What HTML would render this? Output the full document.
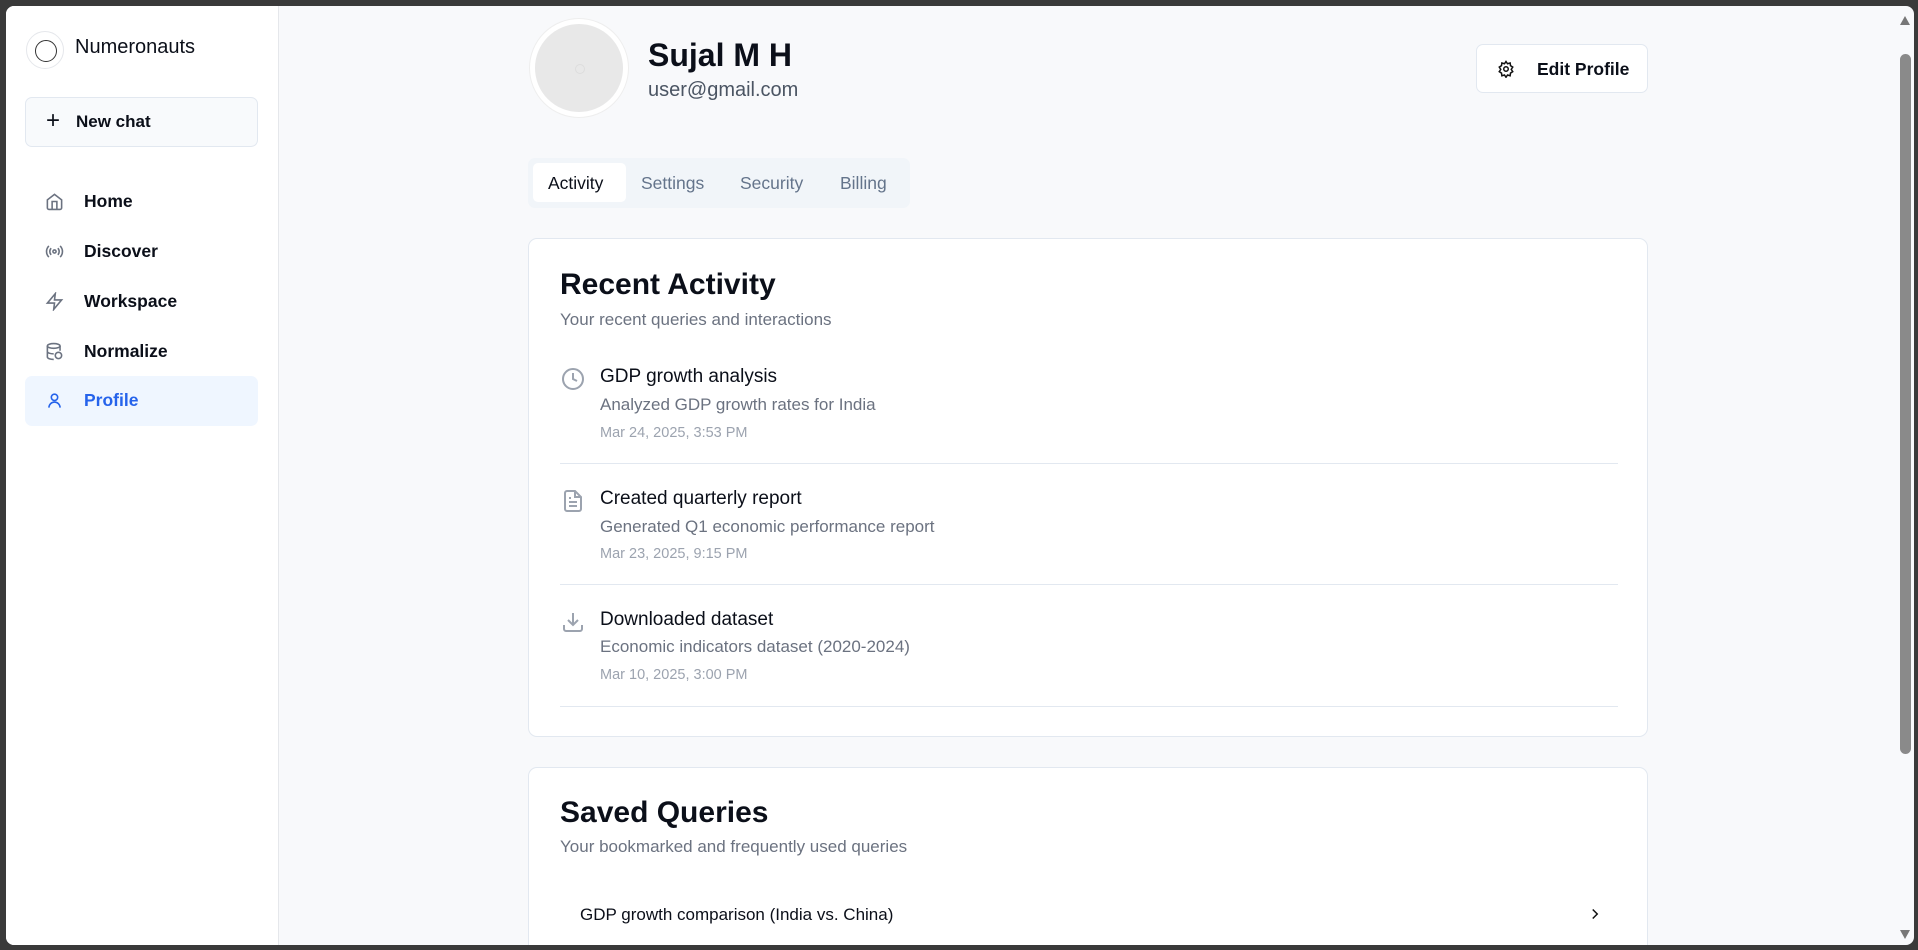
<!DOCTYPE html>
<html><head><meta charset="utf-8"><style>
*{box-sizing:border-box;margin:0;padding:0}
body{width:1918px;height:950px;background:#3a3a3a;font-family:"Liberation Sans",sans-serif;overflow:hidden;position:relative;color:#0b0f19}
.win{position:absolute;left:6px;top:6px;width:1908px;height:939px;background:#f8f9fb;border-radius:8px;overflow:hidden}
.side{position:absolute;left:0;top:0;width:273px;height:100%;background:#fff;border-right:1px solid #e5e7eb}
.a{position:absolute;white-space:nowrap}
.logo{left:20px;top:25px;width:38px;height:38px;border-radius:50%;border:1px solid #e5e7eb}
.logo:after{content:"";position:absolute;left:8px;top:8px;width:20px;height:20px;border-radius:50%;border:1.5px solid #333}
.nc{left:19px;top:91px;width:233px;height:50px;border:1px solid #e2e8f0;border-radius:7px;background:#f8fafc;font-size:17px;font-weight:600;padding:14px 0 0 50px}
.nav{left:19px;width:233px;height:50px;border-radius:7px;font-size:17.5px;font-weight:600;padding:14px 0 0 59px}
.nav svg{position:absolute;left:20px;top:15px}
.main{position:absolute;left:522px;top:0}
.card{position:absolute;background:#fff;border:1px solid #e2e8f0;border-radius:9px;width:1120px}
.t{font-size:19px;font-weight:500}
.d{font-size:17px;color:#6b7280}
.dt{font-size:14.5px;color:#9ca3af}
.hr{position:absolute;left:31px;width:1058px;height:1px;background:#e2e8f0}
.sb{position:absolute;right:3px;top:48px;width:11px;height:700px;background:#8a8a8a;border-radius:6px}
</style></head><body>
<div class="win">
<div class="side">
<div class="a logo"></div>
<div class="a" style="left:69px;top:30px;font-size:20px">Numeronauts</div>
<div class="a nc"><span style="position:absolute;left:20px;top:9px;font-size:24px;font-weight:300">+</span>New chat</div>
<div class="a nav" style="top:171px"><svg width="19" height="19" viewBox="0 0 24 24" fill="none" stroke="#6b7280" stroke-width="2"><path d="M3 10l9-7 9 7v10a2 2 0 0 1-2 2H5a2 2 0 0 1-2-2z"/><path d="M9 22V12h6v10"/></svg>Home</div>
<div class="a nav" style="top:221px"><svg width="19" height="19" viewBox="0 0 24 24" fill="none" stroke="#6b7280" stroke-width="2"><circle cx="12" cy="12" r="2"/><path d="M16.2 7.8a6 6 0 0 1 0 8.4M7.8 16.2a6 6 0 0 1 0-8.4M19.1 4.9a10 10 0 0 1 0 14.2M4.9 19.1a10 10 0 0 1 0-14.2"/></svg>Discover</div>
<div class="a nav" style="top:271px"><svg width="19" height="19" viewBox="0 0 24 24" fill="none" stroke="#6b7280" stroke-width="2"><path d="M13 2L3 14h9l-1 8 10-12h-9z"/></svg>Workspace</div>
<div class="a nav" style="top:321px"><svg width="19" height="19" viewBox="0 0 24 24" fill="none" stroke="#6b7280" stroke-width="2"><ellipse cx="11" cy="5" rx="8" ry="3"/><path d="M3 5v14c0 1.7 3.6 3 8 3M3 12c0 1.7 3.6 3 8 3M19 5v6"/><circle cx="17" cy="17" r="4"/></svg>Normalize</div>
<div class="a nav" style="top:370px;background:#eff6ff;color:#2563eb"><svg width="19" height="19" viewBox="0 0 24 24" fill="none" stroke="#2563eb" stroke-width="2"><circle cx="12" cy="8" r="4"/><path d="M5 21a7 7 0 0 1 14 0"/></svg>Profile</div>
</div>
<div class="main">
<div class="a" style="left:2px;top:13px;width:98px;height:98px;border-radius:50%;background:#e8e8e8;border:5px solid #fff;box-shadow:0 0 0 1px #eee"><div style="position:absolute;left:40px;top:40px;width:10px;height:10px;border-radius:50%;border:1px solid #ddd"></div></div>
<div class="a" style="left:120px;top:31px;font-size:32px;font-weight:600">Sujal M H</div>
<div class="a" style="left:120px;top:73px;font-size:20px;color:#4b5563">user@gmail.com</div>
<div class="a" style="left:948px;top:38px;width:172px;height:49px;background:#fff;border:1px solid #e2e8f0;border-radius:7px;font-size:17.5px;font-weight:600;padding:14px 0 0 60px"><svg style="position:absolute;left:20px;top:15px" width="18" height="18" viewBox="0 0 24 24" fill="none" stroke="#111" stroke-width="2"><circle cx="12" cy="12" r="3"/><path d="M12 2l2 3 3.5-1 .5 3.5 3 2-2 3 2 3-3 2-.5 3.5-3.5-1-2 3-2-3-3.5 1-.5-3.5-3-2 2-3-2-3 3-2 .5-3.5 3.5 1z"/></svg>Edit Profile</div>
<div class="a" style="left:0;top:152px;width:382px;height:50px;background:#f1f5f9;border-radius:7px;font-size:17.5px;color:#64748b">
<div class="a" style="left:5px;top:5px;width:93px;height:39px;background:#fff;border-radius:5px;color:#0b0f19;padding:10px 0 0 15px">Activity</div>
<div class="a" style="left:113px;top:15px">Settings</div>
<div class="a" style="left:212px;top:15px">Security</div>
<div class="a" style="left:312px;top:15px">Billing</div>
</div>
<div class="card" style="left:0;top:232px;height:499px">
<div class="a" style="left:31px;top:29px;font-size:30px;font-weight:600">Recent Activity</div>
<div class="a d" style="left:31px;top:71px">Your recent queries and interactions</div>
<svg class="a" style="left:32px;top:128px" width="24" height="24" viewBox="0 0 24 24" fill="none" stroke="#9ca3af" stroke-width="2"><circle cx="12" cy="12" r="10"/><path d="M12 6v6l4 2"/></svg>
<div class="a t" style="left:71px;top:127px">GDP growth analysis</div>
<div class="a d" style="left:71px;top:156px">Analyzed GDP growth rates for India</div>
<div class="a dt" style="left:71px;top:186px">Mar 24, 2025, 3:53 PM</div>
<div class="hr" style="top:224px"></div>
<svg class="a" style="left:32px;top:250px" width="24" height="24" viewBox="0 0 24 24" fill="none" stroke="#9ca3af" stroke-width="2"><path d="M14 2H6a2 2 0 0 0-2 2v16a2 2 0 0 0 2 2h12a2 2 0 0 0 2-2V8z"/><path d="M14 2v6h6M16 13H8M16 17H8M10 9H8"/></svg>
<div class="a t" style="left:71px;top:249px">Created quarterly report</div>
<div class="a d" style="left:71px;top:278px">Generated Q1 economic performance report</div>
<div class="a dt" style="left:71px;top:307px">Mar 23, 2025, 9:15 PM</div>
<div class="hr" style="top:345px"></div>
<svg class="a" style="left:32px;top:371px" width="24" height="24" viewBox="0 0 24 24" fill="none" stroke="#9ca3af" stroke-width="2"><path d="M21 15v4a2 2 0 0 1-2 2H5a2 2 0 0 1-2-2v-4M7 10l5 5 5-5M12 15V3"/></svg>
<div class="a t" style="left:71px;top:370px">Downloaded dataset</div>
<div class="a d" style="left:71px;top:398px">Economic indicators dataset (2020-2024)</div>
<div class="a dt" style="left:71px;top:428px">Mar 10, 2025, 3:00 PM</div>
<div class="hr" style="top:467px"></div>
</div>
<div class="card" style="left:0;top:761px;height:200px">
<div class="a" style="left:31px;top:28px;font-size:30px;font-weight:600">Saved Queries</div>
<div class="a d" style="left:31px;top:69px">Your bookmarked and frequently used queries</div>
<div class="a" style="left:51px;top:137px;font-size:17px;font-weight:500">GDP growth comparison (India vs. China)</div>
<svg class="a" style="left:1057px;top:137px" width="18" height="18" viewBox="0 0 24 24" fill="none" stroke="#111" stroke-width="2"><path d="M9 6l6 6-6 6"/></svg>
</div>
</div>
<div class="sb"></div>
<div class="a" style="right:4px;top:10px;width:0;height:0;border-left:5px solid transparent;border-right:5px solid transparent;border-bottom:9px solid #777"></div>
<div class="a" style="right:4px;bottom:6px;width:0;height:0;border-left:5px solid transparent;border-right:5px solid transparent;border-top:9px solid #777"></div>
</div>
</body></html>
